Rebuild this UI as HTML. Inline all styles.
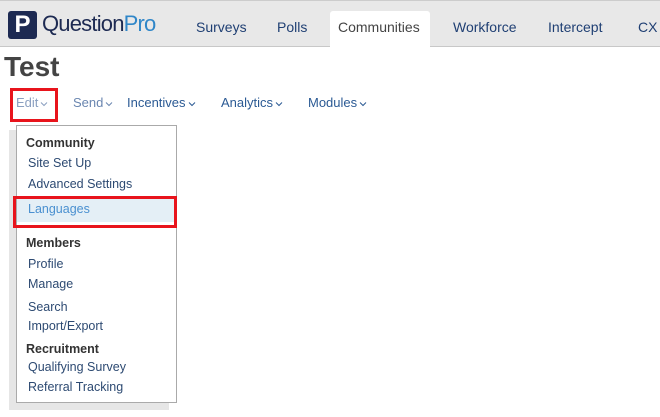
<!DOCTYPE html>
<html><head><style>
*{margin:0;padding:0;box-sizing:border-box}
body{width:660px;height:417px;background:#fff;font-family:"Liberation Sans",sans-serif;position:relative;overflow:hidden}
.hdr{position:absolute;left:0;top:0;width:660px;height:47px;background:#e8e8e8;border-top:1px solid #ccc;border-bottom:1px solid #c8c8c8}
.t{position:absolute;top:18px;font-size:14px;color:#1f3f73}
.act{position:absolute;left:330px;top:10px;width:100px;height:37px;background:#fff;border-radius:3px 3px 0 0}
.n{position:absolute;top:95px;font-size:13px;color:#2b5a94}
.n svg{vertical-align:middle;margin-left:2px}
.it{position:absolute;left:28px;font-size:12.5px;color:#2d4a72}
.h{position:absolute;left:26px;font-size:12.5px;font-weight:bold;color:#333}
.red{position:absolute;border:3px solid #e8141c}
</style></head><body>
<div class="hdr">
<div style="position:absolute;left:8px;top:10px;width:29px;height:28px;background:#1d2a52;border-radius:3px;color:#fff;font-weight:bold;font-size:24px;text-align:center;line-height:28px">P</div>
<div style="position:absolute;left:42px;top:10px;font-size:22px;color:#1d2a52;letter-spacing:-0.8px">Question<span style="color:#2f86c8">Pro</span></div>
<div class="t" style="left:196px">Surveys</div>
<div class="t" style="left:277px">Polls</div>
<div class="act"></div>
<div class="t" style="left:338px;color:#444">Communities</div>
<div class="t" style="left:453px">Workforce</div>
<div class="t" style="left:548px">Intercept</div>
<div class="t" style="left:638px">CX</div>
</div>
<div style="position:absolute;left:4px;top:51px;font-size:28px;font-weight:bold;color:#444">Test</div>
<div class="n" style="left:16px;color:#8a9fc0">Edit<svg width="8" height="6"><path d="M1 1.5L4 4.5L7 1.5" stroke="currentColor" fill="none"/></svg></div>
<div class="n" style="left:73px;color:#6a86b0">Send<svg width="8" height="6"><path d="M1 1.5L4 4.5L7 1.5" stroke="currentColor" fill="none"/></svg></div>
<div class="n" style="left:127px">Incentives<svg width="8" height="6"><path d="M1 1.5L4 4.5L7 1.5" stroke="currentColor" fill="none"/></svg></div>
<div class="n" style="left:221px">Analytics<svg width="8" height="6"><path d="M1 1.5L4 4.5L7 1.5" stroke="currentColor" fill="none"/></svg></div>
<div class="n" style="left:308px">Modules<svg width="8" height="6"><path d="M1 1.5L4 4.5L7 1.5" stroke="currentColor" fill="none"/></svg></div>
<div class="red" style="left:10px;top:88px;width:48px;height:34px"></div>
<div style="position:absolute;left:9px;top:130px;width:160px;height:280px;background:#e6e6e6"></div>
<div style="position:absolute;left:16px;top:125px;width:161px;height:278px;background:#fff;border:1px solid #aaa"></div>
<div class="h" style="top:136px">Community</div>
<div class="it" style="top:156px">Site Set Up</div>
<div class="it" style="top:177px">Advanced Settings</div>
<div style="position:absolute;left:17px;top:199px;width:158px;height:23px;background:#e4eff6"></div>
<div class="it" style="top:202px;color:#4a90d0">Languages</div>
<div class="red" style="left:13px;top:196px;width:164px;height:32px"></div>
<div class="h" style="top:236px">Members</div>
<div class="it" style="top:257px">Profile</div>
<div class="it" style="top:277px">Manage</div>
<div class="it" style="top:300px">Search</div>
<div class="it" style="top:319px">Import/Export</div>
<div class="h" style="top:342px">Recruitment</div>
<div class="it" style="top:360px">Qualifying Survey</div>
<div class="it" style="top:380px">Referral Tracking</div>
</body></html>
